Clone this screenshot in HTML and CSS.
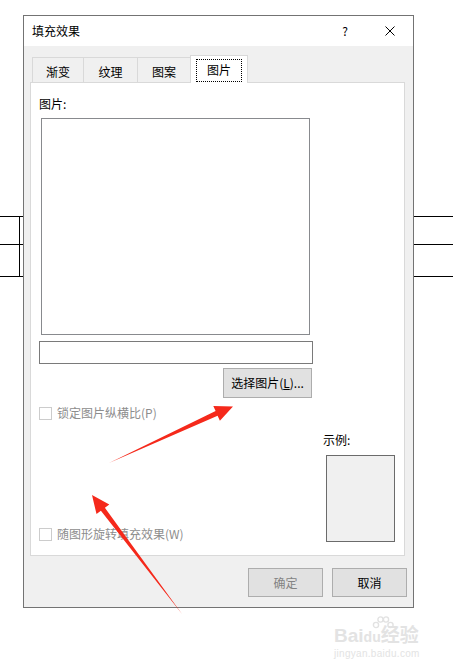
FILE: index.html
```html
<!DOCTYPE html>
<html lang="zh-CN">
<head>
    <meta charset="UTF-8">
    <meta name="viewport" content="width=device-width, initial-scale=1.0">
    <title>填充效果</title>
    <link rel="stylesheet" href="styles.css">
</head>
<body>
    <div class="page">
        <div class="table-stub stub-left">
            <div class="stub-row"></div>
            <div class="stub-row tall"></div>
        </div>

        <div class="dialog">
            <div class="titlebar">
                <span class="title">填充效果</span>
                <span class="help">?</span>
                <span class="close">
                    <svg width="10" height="10" viewBox="0 0 10 10">
                        <path d="M0.5 0.5 L9.5 9.5 M9.5 0.5 L0.5 9.5" stroke="#000" stroke-width="1" fill="none"/>
                    </svg>
                </span>
            </div>

            <div class="dialog-body">
                <div class="tabs">
                    <div class="tab tab-1">渐变</div>
                    <div class="tab tab-2">纹理</div>
                    <div class="tab tab-3">图案</div>
                    <div class="tab tab-active"><span class="focus">图片</span></div>
                </div>

                <div class="panel">
                    <div class="field-label">图片:</div>
                    <div class="picture-box"></div>
                    <div class="path-input"></div>
                    <button class="btn btn-pick">选择图片(<u>L</u>)...</button>

                    <label class="check check-lock">
                        <span class="check-box"></span>
                        <span>锁定图片纵横比(P)</span>
                    </label>

                    <div class="bottom-row">
                        <label class="check check-rotate">
                            <span class="check-box"></span>
                            <span>随图形旋转填充效果(W)</span>
                        </label>
                        <div class="sample">
                            <div class="sample-label">示例:</div>
                            <div class="sample-box"></div>
                        </div>
                    </div>
                </div>

                <div class="actions">
                    <button class="btn btn-action disabled">确定</button>
                    <button class="btn btn-action">取消</button>
                </div>
            </div>
        </div>

        <div class="table-stub stub-right">
            <div class="stub-row"></div>
            <div class="stub-row tall"></div>
        </div>
    </div>

    <!-- annotation arrows drawn over the screenshot -->
    <svg class="arrows" width="453" height="669" viewBox="0 0 453 669">
        <polygon points="109,463 215.6,411.1 213.3,406.1 233,406.5 219.9,420.7 217.6,415.7" fill="#f5291b"/>
        <polygon points="182,614 100.9,510.8 96.5,514.1 92,495 109.3,504.5 104.9,507.8" fill="#f5291b"/>
    </svg>

    <div class="watermark">
        <svg class="paw" width="22" height="16" viewBox="0 0 22 16">
            <circle cx="4" cy="9" r="2.6" fill="none" stroke="#e2e2e2" stroke-width="1.4"/>
            <circle cx="8.5" cy="3.5" r="2.6" fill="none" stroke="#e2e2e2" stroke-width="1.4"/>
            <circle cx="14" cy="3.5" r="2.6" fill="none" stroke="#e2e2e2" stroke-width="1.4"/>
            <circle cx="18.5" cy="9" r="2.6" fill="none" stroke="#e2e2e2" stroke-width="1.4"/>
        </svg>
        <div class="wm-brand">Bai<span class="wm-du">du</span>经验</div>
        <div class="wm-url">jingyan.baidu.com</div>
    </div>
</body>
</html>
```

FILE: styles.css
```css
body {
    margin: 0;
    background-color: #fff;
    font-family: "Noto Sans CJK SC", "Noto Sans", sans-serif;
    font-size: 12px;
    color: #000;
}

.page {
    display: flex;
    align-items: flex-start;
    padding-top: 15px;
    height: 654px;
}

/* bits of the document table peeking out behind the dialog */
.table-stub {
    margin-top: 201px;
    border-bottom: 1px solid #000;
}

.stub-left {
    width: 23px;
    background: linear-gradient(#000, #000) 19px 0 / 1px 100% no-repeat;
}

.stub-right {
    flex: 1;
}

.stub-row {
    height: 27px;
    border-top: 1px solid #000;
}

.stub-row.tall {
    height: 31px;
}

.dialog {
    width: 391px;
    height: 593px;
    box-sizing: border-box;
    border: 1px solid #737373;
    display: flex;
    flex-direction: column;
}

.titlebar {
    height: 30px;
    background-color: #fff;
    display: flex;
    align-items: center;
    padding-left: 8px;
}

.title {
    line-height: 16px;
}

.help {
    margin-left: auto;
    width: 20px;
    text-align: center;
    line-height: 16px;
}

.close {
    width: 46px;
    margin-left: 12px;
    display: flex;
    justify-content: center;
}

.dialog-body {
    flex: 1;
    background-color: #f0f0f0;
    padding-top: 9px;
}

.tabs {
    display: flex;
    align-items: flex-end;
    height: 28px;
    margin-bottom: -1px;
    padding-left: 8px;
}

.tab {
    box-sizing: border-box;
    height: 26px;
    border-left: 1px solid #d9d9d9;
    border-top: 1px solid #d9d9d9;
    padding-top: 6px;
    line-height: 16px;
    text-align: center;
}

.tab-1 { width: 51px; }
.tab-2 { width: 54px; }
.tab-3 { width: 53px; }

.tab-active {
    position: relative;
    width: 58px;
    height: 28px;
    padding-top: 3px;
    border-right: 1px solid #d9d9d9;
    background-color: #fff;
}

.focus {
    display: inline-block;
    width: 46px;
    height: 23px;
    box-sizing: border-box;
    border: 1px dotted #000;
    line-height: 20px;
}

.panel {
    width: 375px;
    height: 474px;
    box-sizing: border-box;
    margin-left: 6px;
    border: 1px solid #d9d9d9;
    background-color: #fff;
    padding: 13px 8px 13px 8px;
    display: flex;
    flex-direction: column;
    align-items: flex-start;
}

.field-label {
    line-height: 16px;
}

.picture-box {
    width: 269px;
    height: 217px;
    box-sizing: border-box;
    margin: 6px 0 0 2px;
    border: 1px solid #888a8e;
}

.path-input {
    width: 274px;
    height: 23px;
    box-sizing: border-box;
    margin-top: 6px;
    border: 1px solid #7a7a7a;
    background-color: #fff;
}

.btn {
    font-family: inherit;
    font-size: 12px;
    color: #000;
    background-color: #e1e1e1;
    border: 1px solid #adadad;
    padding: 0;
    line-height: 16px;
}

.btn-pick {
    width: 89px;
    height: 30px;
    margin: 4px 0 0 184px;
}

.check {
    display: flex;
    align-items: center;
    gap: 5px;
    color: #8d8d8d;
    line-height: 16px;
}

.check-box {
    width: 13px;
    height: 13px;
    box-sizing: border-box;
    border: 1px solid #cccccc;
    background-color: #fff;
}

.check-lock {
    margin-top: 7px;
}

.bottom-row {
    margin-top: auto;
    width: 100%;
    display: flex;
    align-items: flex-end;
}

.check-rotate {
    margin-bottom: 0;
}

.sample {
    margin-left: auto;
    margin-right: 1px;
}

.sample-label {
    line-height: 16px;
    margin-left: -3px;
}

.sample-box {
    width: 69px;
    height: 87px;
    box-sizing: border-box;
    margin-top: 7px;
    border: 1px solid #6b6b6b;
    background-color: #f0f0f0;
}

.actions {
    display: flex;
    justify-content: flex-end;
    gap: 9px;
    margin-top: 12px;
    padding-right: 6px;
}

.btn-action {
    width: 75px;
    height: 29px;
}

.btn-action.disabled {
    color: #838383;
}

.arrows {
    position: absolute;
    left: 0;
    top: 0;
    pointer-events: none;
}

.watermark {
    position: absolute;
    left: 334px;
    top: 616px;
    color: #e3e3e3;
    font-family: "Liberation Sans", "Noto Sans CJK SC", sans-serif;
}

.paw {
    position: absolute;
    left: 38px;
    top: 0;
}

.wm-brand {
    margin-top: 9px;
    font-size: 19px;
    font-weight: bold;
    line-height: 22px;
}

.wm-du {
    font-size: 14px;
}

.wm-url {
    font-size: 10px;
    line-height: 12px;
    letter-spacing: 0.3px;
}
```
